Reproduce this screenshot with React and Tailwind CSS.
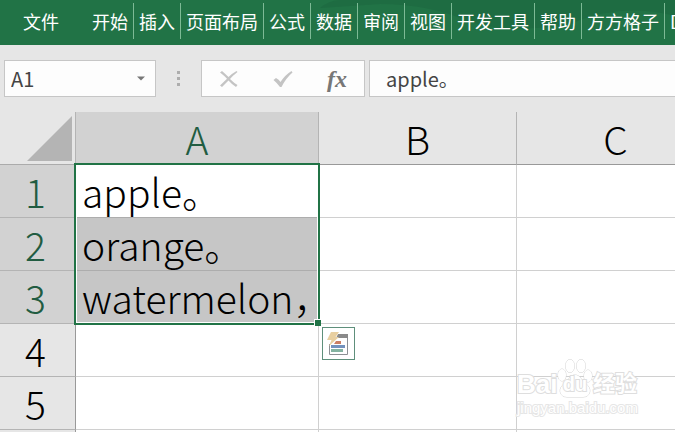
import { useState } from 'react'

const TABS = ['开始', '插入', '页面布局', '公式', '数据', '审阅', '视图', '开发工具', '帮助', '方方格子', 'D']

const COLUMNS = ['A', 'B', 'C']

const ROWS = [
  { id: 1, value: 'apple。' },
  { id: 2, value: 'orange。' },
  { id: 3, value: 'watermelon，' },
  { id: 4, value: '' },
  { id: 5, value: '' },
]

const SELECTED = [1, 2, 3]

function Ribbon() {
  return (
    <nav className="relative flex h-[45px] overflow-hidden bg-[#217346] pt-[3px] text-lg text-white">
      <svg className="absolute top-0 right-0 h-[45px] w-[355px]" viewBox="0 0 355 45" aria-hidden="true">
        <path d="M0 8 Q10 0 20 0 H355 V16 Q300 2 250 24 Q190 34 150 22 Q110 4 60 4 Z" fill="#1d6740" opacity="0.6" />
      </svg>
      <button type="button" className="relative mr-[23px] h-9 w-16 shrink-0 pl-[18px] text-center whitespace-nowrap">文件</button>
      {TABS.map((tab) => (
        <button
          key={tab}
          type="button"
          className="relative h-9 shrink-0 border-r border-[#7dba95] px-[5px] whitespace-nowrap last:border-r-0"
        >
          {tab}
        </button>
      ))}
    </nav>
  )
}

function FormulaBar() {
  const [formula, setFormula] = useState('apple。')

  return (
    <div className="flex items-center bg-[#e6e6e6] pt-[15px] pb-[15px] pl-1 text-[#444]">
      <div className="flex h-[37px] w-[152px] items-center border border-[#c6c6c6] bg-[#fdfdfd] px-1.5">
        <input aria-label="Name box" defaultValue="A1" className="min-w-0 flex-1 text-xl outline-none" />
        <button type="button" aria-label="Named ranges" className="flex w-4 justify-center">
          <svg width="8" height="5" viewBox="0 0 8 5"><path d="M0 0.500h8L4 4.500z" fill="#777" /></svg>
        </button>
      </div>
      <svg className="mx-5 shrink-0" width="5" height="16" viewBox="0 0 5 16" fill="#adadad" aria-hidden="true">
        <path d="M1 0h3v3H1zM1 6h3v3H1zM1 12h3v3H1z" />
      </svg>
      <div className="flex h-[37px] w-[164px] shrink-0 items-center justify-between border border-[#c6c6c6] bg-[#fdfdfd] px-[17px]">
        <button type="button" aria-label="Cancel">
          <svg width="20" height="18" viewBox="0 0 20 18" fill="#c4c4c4">
            <path d="M1 2.500 3 1Q7 4.500 9.500 7 13 3.500 17.500 1L18.500 2Q14 5.500 11 9 15 13 18.500 15L17 17Q12 13.500 9.500 10.500 6 14 3 17L1 15.500Q4 12.500 8 8.700 5 5.500 1 2.500z" />
          </svg>
        </button>
        <button type="button" aria-label="Enter">
          <svg width="20" height="18" viewBox="0 0 20 18" fill="#c4c4c4">
            <path d="M0.500 10 3 8Q6 9.500 7.500 12 12 5 18.500 1L19.500 2.500Q13 8 8.500 17H7Q4 13 0.500 10z" />
          </svg>
        </button>
        <button type="button" aria-label="Insert function" className="font-['Liberation_Serif',serif] text-2xl leading-6 font-bold text-[#777] italic">
          fx
        </button>
      </div>
      <input
        aria-label="Formula"
        value={formula}
        onChange={(e) => setFormula(e.target.value)}
        className="ml-1 h-[37px] min-w-0 flex-1 border border-r-0 border-[#c6c6c6] bg-[#fdfdfd] pl-4 text-xl outline-none"
      />
    </div>
  )
}

function QuickAnalysis() {
  return (
    <button
      type="button"
      aria-label="Quick analysis"
      className="absolute top-[215px] left-[322px] flex size-[33px] items-center justify-center border border-[#5e8f7b] bg-white"
    >
      <svg width="23" height="25" viewBox="0 0 23 25" aria-hidden="true">
        <path d="M2.500 13V23.500H20.500V4" fill="none" stroke="#8c8f94" />
        <path d="M11 3H21V7H9z" fill="#8a8a8a" />
        <path d="M9 10H14V13H7z" fill="#cb7e63" />
        <path d="M4 14h14v3H4z" fill="#7392bd" />
        <path d="M4 18h12v3H4z" fill="#84b3a1" />
        <path d="M4 1H12L8.500 6H12L2 15 4.500 9H0z" fill="#e8cfa0" />
      </svg>
    </button>
  )
}

function Watermark() {
  return (
    <div className="pointer-events-none absolute top-[246px] left-[517px] w-32 font-['Liberation_Sans','Noto_Sans_CJK_SC',sans-serif] font-bold text-white">
      <div className="flex h-10 items-end [-webkit-text-stroke:2px_#dedede] [paint-order:stroke_fill]">
        <span className="w-10 text-[26px] leading-7">Bai</span>
        <span className="relative flex h-10 w-9 shrink-0 items-end justify-center text-xl leading-7">
          <svg className="absolute inset-0" width="36" height="40" viewBox="0 0 36 40" fill="#fff" stroke="#d4d4d4" aria-hidden="true">
            <ellipse cx="5" cy="17" rx="4" ry="6" />
            <ellipse cx="13" cy="8" rx="4.500" ry="6.500" />
            <ellipse cx="24" cy="8" rx="4.500" ry="6.500" />
            <ellipse cx="31" cy="18" rx="4" ry="6" />
            <path d="M18 17C12 17 12 23 7 26 1 30 2 39 10 39H26C34 39 35 30 29 26 24 23 24 17 18 17z" />
          </svg>
          <span className="relative">du</span>
        </span>
        <span className="text-[22px] leading-7 whitespace-nowrap">经验</span>
      </div>
      <div className="text-[15px] leading-5 font-normal [-webkit-text-stroke:2px_#e6e6e6] [paint-order:stroke_fill]">
        jingyan.baidu.com
      </div>
    </div>
  )
}

function Sheet() {
  return (
    <div className="relative">
      <table className="w-full min-w-[715px] table-fixed border-separate border-spacing-0 text-[39px] leading-[52px] font-light text-black">
        <colgroup>
          <col className="w-[76px]" />
          <col className="w-[243px]" />
          <col className="w-[198px]" />
          <col />
        </colgroup>
        <thead>
          <tr>
            <th className="h-[53px] border-r border-b border-r-[#b4b4b4] border-b-[#ababab] bg-[#e6e6e6] p-0">
              <button type="button" aria-label="Select all" className="ml-auto block w-12">
                <svg width="45" height="45" viewBox="0 0 45 45"><path d="M45 0V45H0z" fill="#b4b4b4" /></svg>
              </button>
            </th>
            {COLUMNS.map((col) => (
              <th
                key={col}
                scope="col"
                className={`h-[53px] border-r border-b border-r-[#b4b4b4] border-b-[#999] p-0 font-light ${
                  col === 'A' ? 'bg-[#d2d2d2] text-[#215c41]' : 'bg-[#e6e6e6]'
                }`}
              >
                {col}
              </th>
            ))}
          </tr>
        </thead>
        <tbody>
          {ROWS.map((row) => {
            const selected = SELECTED.includes(row.id)
            return (
              <tr key={row.id}>
                <th
                  scope="row"
                  className={`h-[53px] border-r border-b border-r-[#999] border-b-[#b4b4b4] p-0 pr-1 font-light ${
                    selected ? 'bg-[#d2d2d2] text-[#215c41]' : 'bg-[#e6e6e6]'
                  }`}
                >
                  {row.id}
                </th>
                <td
                  className={`border-r border-b border-r-[#d0d0d0] py-0 pl-1.5 whitespace-nowrap ${
                    selected ? 'border-b-[#adadad]' : 'border-b-[#d0d0d0]'
                  } ${selected && row.id !== 1 ? 'bg-[#c6c6c6]' : 'bg-white'}`}
                >
                  {row.value}
                </td>
                <td className="border-r border-b border-[#d0d0d0] bg-white" />
                <td className="border-r border-b border-[#d0d0d0] bg-white" />
              </tr>
            )
          })}
          <tr>
            <th className="h-[53px] border-r border-b border-r-[#999] border-b-[#b4b4b4] bg-[#e6e6e6] p-0" />
            <td className="border-r border-b border-[#d0d0d0] bg-white" />
            <td className="border-r border-b border-[#d0d0d0] bg-white" />
            <td className="border-r border-b border-[#d0d0d0] bg-white" />
          </tr>
        </tbody>
      </table>
      <div className="pointer-events-none absolute top-[51px] left-[74px] h-[162px] w-[246px] border-2 border-[#217346] inset-ring inset-ring-white">
        <span className="absolute -right-[3px] -bottom-[3px] size-[7px] border-t border-l border-white bg-[#217346]" />
      </div>
      <QuickAnalysis />
      <Watermark />
    </div>
  )
}

export default function App() {
  return (
    <div className="h-screen overflow-hidden bg-white font-['Noto_Sans_CJK_SC',sans-serif]">
      <Ribbon />
      <FormulaBar />
      <Sheet />
    </div>
  )
}
